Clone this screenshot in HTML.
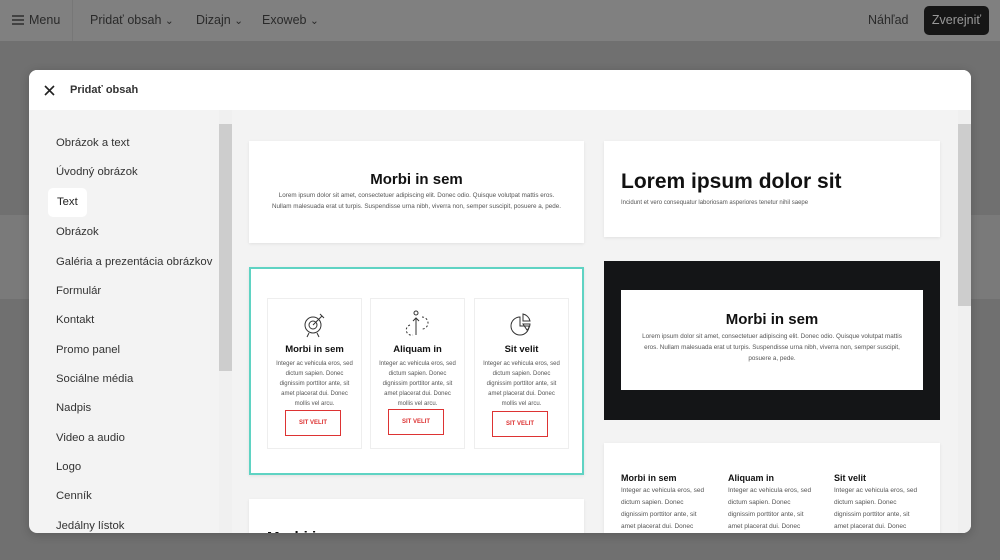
<!DOCTYPE html>
<html><head><meta charset="utf-8"><style>
*{box-sizing:border-box;margin:0;padding:0}
body{width:1000px;height:560px;overflow:hidden;background:#707070;font-family:"Liberation Sans",sans-serif;position:relative}
.top{position:absolute;left:0;top:0;width:1000px;height:41px;background:#808080;color:#2a2a2a;font-size:12.5px}
.top span{position:absolute;top:13px}
.band{position:absolute;left:0;top:215px;width:1000px;height:84px;background:#7a7a7a}
.modal{position:absolute;left:29px;top:70px;width:942px;height:463px;background:#f3f3f3;border-radius:8px;overflow:hidden;box-shadow:0 2px 10px rgba(0,0,0,.2)}
.hdr{position:absolute;left:0;top:0;width:942px;height:40px;background:#fff}
.side{position:absolute;left:0;top:40px;width:203px;height:423px}
.side div{position:absolute;left:27px;font-size:11.3px;color:#333}
.sb{position:absolute;width:13px;background:#f0f0f0}
.card{position:absolute;background:#fff;box-shadow:0 1px 3px rgba(0,0,0,.08)}
.h{font-family:"Liberation Sans",sans-serif;font-weight:bold;color:#111}
.p{font-size:7px;color:#555;line-height:11px}
.fc{position:absolute;top:29px;width:95px;height:151px;border:1px solid #eee;text-align:center}
.fc .h{font-size:9.5px;margin-top:0}
.fc .p{font-size:6px;line-height:10px;padding:4px 8px 0}
.btn{position:absolute;left:17px;width:56px;height:26px;border:1px solid #d33;color:#d33;font-size:6px;line-height:24px;text-align:center;font-weight:bold}
</style></head><body>
<div class="band"></div>
<div class="top">
<svg style="position:absolute;left:12px;top:15px" width="12" height="10"><path d="M0 1h12M0 5h12M0 9h12" stroke="#2e2e2e" stroke-width="1.5"/></svg>
<span style="left:29px">Menu</span>
<div style="position:absolute;left:72px;top:0;width:1px;height:41px;background:#777"></div>
<span style="left:90px">Pridať obsah <small>⌄</small></span>
<span style="left:196px">Dizajn <small>⌄</small></span>
<span style="left:262px">Exoweb <small>⌄</small></span>
<span style="left:868px">Náhľad</span>
<div style="position:absolute;left:924px;top:6px;width:65px;height:29px;background:#161616;border-radius:5px;color:#999;font-size:12.5px;line-height:29px;text-align:center">Zverejniť</div>
</div>
<div class="modal">
<div class="hdr">
<svg style="position:absolute;left:15px;top:15px" width="11" height="11"><path d="M1 1l9 9M10 1l-9 9" stroke="#222" stroke-width="1.6"/></svg>
<div style="position:absolute;left:41px;top:14px;font-size:11px;color:#333;font-weight:bold">Pridať obsah</div>
</div>
<div class="side">
<div style="top:27px">Obrázok a text</div>
<div style="top:56px">Úvodný obrázok</div>
<div style="left:19px;top:78px;width:39px;height:29px;background:#fff;border-radius:5px;padding:8px 0 0 9px;color:#222">Text</div>
<div style="top:116px">Obrázok</div>
<div style="top:146px">Galéria a prezentácia obrázkov</div>
<div style="top:175px">Formulár</div>
<div style="top:204px">Kontakt</div>
<div style="top:234px">Promo panel</div>
<div style="top:263px">Sociálne média</div>
<div style="top:292px">Nadpis</div>
<div style="top:322px">Video a audio</div>
<div style="top:351px">Logo</div>
<div style="top:380px">Cenník</div>
<div style="top:410px">Jedálny lístok</div>
</div>
<div class="sb" style="left:190px;top:40px;height:423px"><div style="margin-top:14px;height:247px;background:#cdcdcd"></div></div>
<div class="sb" style="left:929px;top:40px;height:423px"><div style="margin-top:14px;height:182px;background:#cdcdcd"></div></div>

<div class="card" style="left:220px;top:71px;width:335px;height:102px;text-align:center">
<div class="h" style="font-size:15px;margin-top:30px">Morbi in sem</div>
<div class="p" style="font-size:6.3px;margin-top:2px">Lorem ipsum dolor sit amet, consectetuer adipiscing elit. Donec odio. Quisque volutpat mattis eros.<br>Nullam malesuada erat ut turpis. Suspendisse urna nibh, viverra non, semper suscipit, posuere a, pede.</div>
</div>
<div class="card" style="left:220px;top:197px;width:335px;height:208px;border:2px solid #5fd3c3">
<div class="fc" style="left:16px"><svg width="30" height="30" style="margin-top:10px"><circle cx="13" cy="16" r="8" fill="none" stroke="#333"/><circle cx="13" cy="16" r="4" fill="none" stroke="#333"/><path d="M13 16l9-9M20 5l4 4M9 24l-2 4M17 24l2 4" stroke="#333" fill="none"/></svg><div class="h">Morbi in sem</div><div class="p">Integer ac vehicula eros, sed dictum sapien. Donec dignissim porttitor ante, sit amet placerat dui. Donec mollis vel arcu.</div><div class="btn" style="top:111px">SIT VELIT</div></div>
<div class="fc" style="left:119px"><svg width="30" height="30" style="margin-top:10px"><circle cx="13" cy="4" r="2" fill="none" stroke="#333"/><path d="M13 9v17M10 12l3-3 3 3" stroke="#333" fill="none"/><path d="M19 8a6 6 0 0 1 0 12M7 16a5 5 0 0 0 3 10" stroke="#333" fill="none" stroke-dasharray="2 2"/></svg><div class="h">Aliquam in</div><div class="p">Integer ac vehicula eros, sed dictum sapien. Donec dignissim porttitor ante, sit amet placerat dui. Donec mollis vel arcu.</div><div class="btn" style="top:110px">SIT VELIT</div></div>
<div class="fc" style="left:223px"><svg width="30" height="30" style="margin-top:10px"><path d="M13 8a9 9 0 1 0 9 9h-9z" fill="none" stroke="#333"/><path d="M16 5a9 9 0 0 1 7 7h-7zM16 15h7a8 8 0 0 1-3 6z" fill="none" stroke="#333"/></svg><div class="h">Sit velit</div><div class="p">Integer ac vehicula eros, sed dictum sapien. Donec dignissim porttitor ante, sit amet placerat dui. Donec mollis vel arcu.</div><div class="btn" style="top:112px">SIT VELIT</div></div>
</div>
<div class="card" style="left:220px;top:429px;width:335px;height:60px"><div class="h" style="position:absolute;left:18px;top:30px;font-size:15px">Morbi in</div></div>

<div class="card" style="left:575px;top:71px;width:336px;height:96px">
<div class="h" style="position:absolute;left:17px;top:29px;font-size:21px">Lorem ipsum dolor sit</div>
<div class="p" style="position:absolute;left:17px;top:57px;font-size:6px">Incidunt et vero consequatur laboriosam asperiores tenetur nihil saepe</div>
</div>
<div style="position:absolute;left:575px;top:191px;width:336px;height:159px;background:#141517">
<div style="position:absolute;left:17px;top:29px;width:302px;height:100px;background:#fff;text-align:center">
<div class="h" style="font-size:15px;margin-top:21px">Morbi in sem</div>
<div class="p" style="font-size:6.3px;padding:3px 18px 0">Lorem ipsum dolor sit amet, consectetuer adipiscing elit. Donec odio. Quisque volutpat mattis eros. Nullam malesuada erat ut turpis. Suspendisse urna nibh, viverra non, semper suscipit, posuere a, pede.</div>
</div></div>
<div class="card" style="left:575px;top:373px;width:336px;height:100px">
<div style="position:absolute;left:17px;top:30px;width:90px"><div class="h" style="font-size:9px">Morbi in sem</div><div class="p" style="font-size:6.5px;line-height:12px;margin-top:2px">Integer ac vehicula eros, sed dictum sapien. Donec dignissim porttitor ante, sit amet placerat dui. Donec</div></div>
<div style="position:absolute;left:124px;top:30px;width:90px"><div class="h" style="font-size:9px">Aliquam in</div><div class="p" style="font-size:6.5px;line-height:12px;margin-top:2px">Integer ac vehicula eros, sed dictum sapien. Donec dignissim porttitor ante, sit amet placerat dui. Donec</div></div>
<div style="position:absolute;left:230px;top:30px;width:90px"><div class="h" style="font-size:9px">Sit velit</div><div class="p" style="font-size:6.5px;line-height:12px;margin-top:2px">Integer ac vehicula eros, sed dictum sapien. Donec dignissim porttitor ante, sit amet placerat dui. Donec</div></div>
</div>
</div>
</body></html>
